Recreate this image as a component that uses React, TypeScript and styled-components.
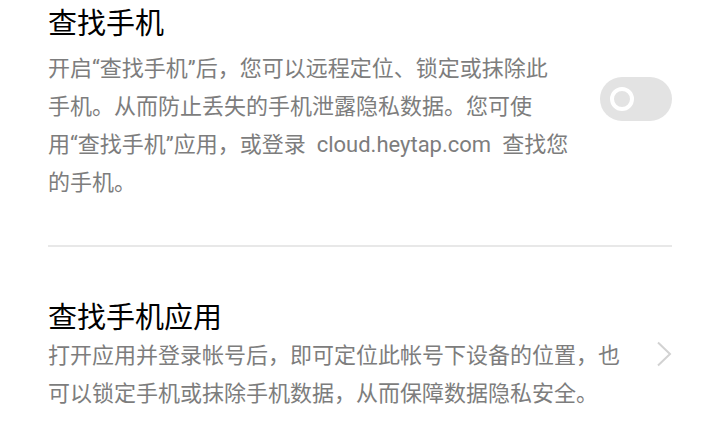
import React from 'react'
import styled, { createGlobalStyle } from 'styled-components'

const GlobalStyle = createGlobalStyle`
  html, body {
    margin: 0;
    padding: 0;
    background: #ffffff;
  }
  body {
    font-family: Roboto, "Noto Sans CJK SC", sans-serif;
  }
`

const Page = styled.div`
  width: 719px;
  height: 424px;
  overflow: hidden;
  padding: 4px 47px 0 48px;
  box-sizing: border-box;
  background: #fff;
`

const Item = styled.div`
  display: flex;
  align-items: flex-start;
  justify-content: space-between;
`

const TextCol = styled.div`
  display: flex;
  flex-direction: column;
`

const Title = styled.div`
  font-size: 29px;
  line-height: 40px;
  color: #000;
`

const Desc = styled.div<{ $gap: number }>`
  margin-top: ${({ $gap }) => $gap}px;
  font-size: 22px;
  line-height: 38px;
  color: #7d7d7d;
  white-space: nowrap;
`

const Url = styled.span`
  margin: 0 11px;
`

const Divider = styled.div`
  height: 2px;
  background: #e8e8e8;
  margin: 43px 0 51px;
`

const Toggle = styled.div`
  margin-top: 73px;
  width: 72px;
  height: 44px;
  border-radius: 22px;
  background: #e3e3e3;
  display: flex;
  align-items: center;
  padding-left: 10px;
  box-sizing: border-box;
`

const Knob = styled.div`
  width: 24px;
  height: 24px;
  border-radius: 50%;
  border: 4px solid #fff;
  box-sizing: border-box;
  background: #e3e3e3;
`

const ChevronBox = styled.div`
  margin-top: 43px;
  display: flex;
`

const Chevron = () => (
  <ChevronBox>
    <svg width="16" height="26" viewBox="0 0 16 26">
      <path d="M2 1.5 L14 13 L2 24.5" fill="none" stroke="#d2d2d2" strokeWidth="2" />
    </svg>
  </ChevronBox>
)

export default function App() {
  return (
    <Page>
      <GlobalStyle />
      <Item>
        <TextCol>
          <Title>查找手机</Title>
          <Desc $gap={6}>
            开启“查找手机”后，您可以远程定位、锁定或抹除此
            <br />
            手机。从而防止丢失的手机泄露隐私数据。您可使
            <br />
            用“查找手机”应用，或登录<Url>cloud.heytap.com</Url>查找您
            <br />
            的手机。
          </Desc>
        </TextCol>
        <Toggle>
          <Knob />
        </Toggle>
      </Item>
      <Divider />
      <Item>
        <TextCol>
          <Title>查找手机应用</Title>
          <Desc $gap={-1}>
            打开应用并登录帐号后，即可定位此帐号下设备的位置，也
            <br />
            可以锁定手机或抹除手机数据，从而保障数据隐私安全。
          </Desc>
        </TextCol>
        <Chevron />
      </Item>
    </Page>
  )
}
